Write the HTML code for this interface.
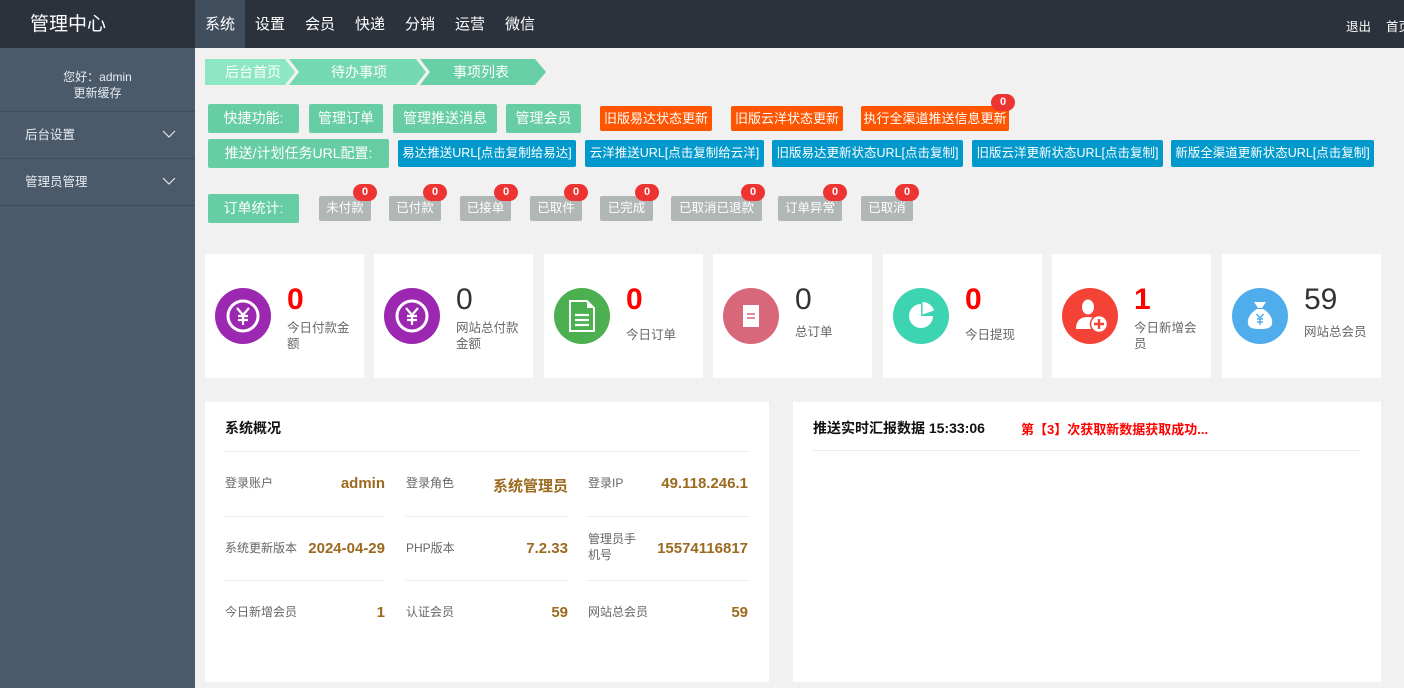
<!DOCTYPE html>
<html><head><meta charset="utf-8"><style>
*{margin:0;padding:0;box-sizing:border-box}
body{width:1404px;height:688px;overflow:hidden;background:#f1f1f1;font-family:"Liberation Sans","Noto Sans CJK SC",sans-serif;position:relative;font-size:13px}
.a{position:absolute}
.top{left:0;top:0;width:1404px;height:48px;background:#2c323c}
.nav{top:0;height:48px;line-height:50px;color:#fff;font-size:15px;text-align:center;width:50px}
.side{left:0;top:48px;width:195px;height:640px;background:#4a5a6b}
.sb{left:0;width:195px;border-bottom:1px solid #3f4d5b;color:#e6ebf0}
.btn{height:29px;line-height:29px;color:#fff;font-size:14px;text-align:center;border-radius:2px;background:#66cda4}
.or{height:25px;line-height:25px;background:#ff5500;color:#fff;font-size:13px;text-align:center;border-radius:2px;top:106px}
.bl{height:27px;line-height:27px;background:#0199cc;color:#fff;font-size:12.5px;text-align:center;border-radius:2px;top:140px}
.gr{height:25px;line-height:25px;background:#b1b7b6;color:#fff;font-size:12.5px;text-align:center;border-radius:2px;top:196px}
.bd{width:24px;height:17px;line-height:17px;border-radius:9px;background:#ee3333;color:#fff;font-size:11px;font-weight:bold;text-align:center}
.card{top:254px;width:159px;height:124px;background:#fff}
.ci{left:10px;top:34px;width:56px;height:56px;border-radius:50%}
.num{left:82px;top:28px;font-size:30px;line-height:36px}
.red{color:#f00;font-weight:bold}
.lb{left:82px;top:66px;font-size:12.5px;color:#666;line-height:16px;width:70px}
.pn{background:#fff}
.k{font-size:12px;color:#666}
.v{font-size:15px;color:#9b6a1e;font-weight:bold;text-align:right}
.hl{height:1px;background:#ececec}
</style></head><body>
<div class="a top"></div>
<div class="a" style="left:30px;top:9px;color:#fff;font-size:19px">管理中心</div>
<div class="a" style="left:195px;top:0;width:50px;height:48px;background:#3f4d5c"></div>
<div class="a nav" style="left:195px">系统</div>
<div class="a nav" style="left:245px">设置</div>
<div class="a nav" style="left:295px">会员</div>
<div class="a nav" style="left:345px">快递</div>
<div class="a nav" style="left:395px">分销</div>
<div class="a nav" style="left:445px">运营</div>
<div class="a nav" style="left:495px">微信</div>
<div class="a" style="left:1346px;top:16px;color:#fff;font-size:12.5px">退出</div>
<div class="a" style="left:1386px;top:16px;color:#fff;font-size:12.5px;white-space:nowrap">首页</div>
<div class="a side"></div>
<div class="a sb" style="top:48px;height:64px;text-align:center;font-size:12px;line-height:16px;padding-top:21px">您好：admin<br>更新缓存</div>
<div class="a sb" style="top:112px;height:47px;line-height:46px;padding-left:25px;font-size:12.5px">后台设置</div>
<div class="a sb" style="top:159px;height:47px;line-height:46px;padding-left:25px;font-size:12.5px">管理员管理</div>
<svg class="a" style="left:162px;top:129px" width="14" height="10"><path d="M1 2 L7 8 L13 2" fill="none" stroke="#dfe4ea" stroke-width="1.2"/></svg>
<svg class="a" style="left:162px;top:176px" width="14" height="10"><path d="M1 2 L7 8 L13 2" fill="none" stroke="#dfe4ea" stroke-width="1.2"/></svg>
<div class="a" style="left:1381px;top:48px;width:23px;height:640px;background:#f1f1f1"></div>

<svg class="a" style="left:205px;top:59px" width="345" height="26">
<polygon points="0,0 80,0 90,13 80,26 0,26" fill="#8de6c4"/>
<polygon points="84,0 211,0 221,13 211,26 84,26 94,13" fill="#74d9b3"/>
<polygon points="215,0 330,0 341,13 330,26 215,26 225,13" fill="#66cfa5"/>
<text x="20" y="18" fill="#fff" font-size="14" font-family="Liberation Sans,Noto Sans CJK SC">后台首页</text>
<text x="126" y="18" fill="#fff" font-size="14" font-family="Liberation Sans,Noto Sans CJK SC">待办事项</text>
<text x="248" y="18" fill="#fff" font-size="14" font-family="Liberation Sans,Noto Sans CJK SC">事项列表</text>
</svg>

<div class="a btn" style="left:208px;top:104px;width:91px">快捷功能:</div>
<div class="a btn" style="left:309px;top:104px;width:74px">管理订单</div>
<div class="a btn" style="left:393px;top:104px;width:104px">管理推送消息</div>
<div class="a btn" style="left:506px;top:104px;width:75px">管理会员</div>
<div class="a or" style="left:600px;width:112px">旧版易达状态更新</div>
<div class="a or" style="left:731px;width:112px">旧版云洋状态更新</div>
<div class="a or" style="left:861px;width:148px">执行全渠道推送信息更新</div>
<div class="a bd" style="left:991px;top:94px">0</div>

<div class="a btn" style="left:208px;top:139px;width:181px">推送/计划任务URL配置:</div>
<div class="a bl" style="left:398px;width:178px">易达推送URL[点击复制给易达]</div>
<div class="a bl" style="left:585px;width:179px">云洋推送URL[点击复制给云洋]</div>
<div class="a bl" style="left:772px;width:191px">旧版易达更新状态URL[点击复制]</div>
<div class="a bl" style="left:972px;width:191px">旧版云洋更新状态URL[点击复制]</div>
<div class="a bl" style="left:1171px;width:203px">新版全渠道更新状态URL[点击复制]</div>

<div class="a btn" style="left:208px;top:194px;width:91px">订单统计:</div>
<div class="a gr" style="left:319px;width:52px">未付款</div><div class="a bd" style="left:353px;top:184px">0</div>
<div class="a gr" style="left:389px;width:52px">已付款</div><div class="a bd" style="left:423px;top:184px">0</div>
<div class="a gr" style="left:460px;width:51px">已接单</div><div class="a bd" style="left:494px;top:184px">0</div>
<div class="a gr" style="left:530px;width:52px">已取件</div><div class="a bd" style="left:564px;top:184px">0</div>
<div class="a gr" style="left:600px;width:53px">已完成</div><div class="a bd" style="left:635px;top:184px">0</div>
<div class="a gr" style="left:671px;width:91px">已取消已退款</div><div class="a bd" style="left:741px;top:184px">0</div>
<div class="a gr" style="left:778px;width:64px">订单异常</div><div class="a bd" style="left:823px;top:184px">0</div>
<div class="a gr" style="left:861px;width:52px">已取消</div><div class="a bd" style="left:895px;top:184px">0</div>

<div class="a card" style="left:205px"><div class="a ci" style="background:#9c27b0"><svg width="56" height="56"><circle cx="28" cy="28" r="15" fill="none" stroke="#fff" stroke-width="3"/><path d="M22 20 L28 27 L34 20 M28 27 V37 M23 28 H33 M23 32 H33" stroke="#fff" stroke-width="2.2" fill="none"/></svg></div><div class="a num red">0</div><div class="a lb">今日付款金额</div></div>
<div class="a card" style="left:374px"><div class="a ci" style="background:#9c27b0"><svg width="56" height="56"><circle cx="28" cy="28" r="15" fill="none" stroke="#fff" stroke-width="3"/><path d="M22 20 L28 27 L34 20 M28 27 V37 M23 28 H33 M23 32 H33" stroke="#fff" stroke-width="2.2" fill="none"/></svg></div><div class="a num" style="color:#333">0</div><div class="a lb">网站总付款金额</div></div>
<div class="a card" style="left:544px"><div class="a ci" style="background:#4caf50"><svg width="56" height="56"><path d="M16 13 H33 L40 20 V43 H16 Z" fill="none" stroke="#fff" stroke-width="2"/><path d="M33 13 V20 H40 Z" fill="#fff"/><path d="M21 27 H35 M21 32 H35 M21 37 H35" stroke="#fff" stroke-width="2.2"/></svg></div><div class="a num red">0</div><div class="a lb" style="top:73px">今日订单</div></div>
<div class="a card" style="left:713px"><div class="a ci" style="background:#d9677a"><svg width="56" height="56"><rect x="20" y="17" width="16" height="22" fill="#fff"/><path d="M24 26 H32 M24 30 H32" stroke="#d9677a" stroke-width="1.6"/></svg></div><div class="a num" style="color:#333">0</div><div class="a lb" style="top:70px">总订单</div></div>
<div class="a card" style="left:883px"><div class="a ci" style="background:#3dd4b2"><svg width="56" height="56"><path d="M28 16 A12 12 0 1 0 40 28 L28 28 Z" fill="#fff"/><path d="M29.5 14 V26.5 L41 22.5 A12 12 0 0 0 29.5 14 Z" fill="#fff"/></svg></div><div class="a num red">0</div><div class="a lb" style="top:73px">今日提现</div></div>
<div class="a card" style="left:1052px"><div class="a ci" style="background:#f44336"><svg width="56" height="56"><ellipse cx="26" cy="19" rx="6" ry="7.5" fill="#fff"/><path d="M14 41 C14 32 19 29 26 29 C31 29 34 31 35 33 L35 41 Z" fill="#fff"/><circle cx="37" cy="36" r="8.5" fill="#fff" stroke="#f44336" stroke-width="1.5"/><path d="M32 36 H42 M37 31 V41" stroke="#f44336" stroke-width="2.4"/></svg></div><div class="a num red">1</div><div class="a lb">今日新增会员</div></div>
<div class="a card" style="left:1222px"><div class="a ci" style="background:#4fadec"><svg width="56" height="56"><path d="M22 14 L34 14 L30 20 L26 20 Z" fill="#fff"/><path d="M25 21 H31 C38 25 41 31 40 36 C39 40 35 41 28 41 C21 41 17 40 16 36 C15 31 18 25 25 21 Z" fill="#fff"/><path d="M24.5 26 L28 30 L31.5 26 M28 30 V37 M25 31 H31 M25 34 H31" stroke="#4fadec" stroke-width="1.5" fill="none"/></svg></div><div class="a num" style="color:#333">59</div><div class="a lb" style="top:70px">网站总会员</div></div>

<div class="a pn" style="left:205px;top:402px;width:564px;height:280px">
<div class="a" style="left:20px;top:16px;font-size:14px;font-weight:bold;color:#111">系统概况</div>
<div class="a hl" style="left:20px;top:49px;width:523px"></div>
<div class="a k" style="left:20px;top:72px">登录账户</div><div class="a v" style="left:100px;top:73px;width:80px">admin</div>
<div class="a k" style="left:201px;top:72px">登录角色</div><div class="a v" style="left:261px;top:73px;width:102px">系统管理员</div>
<div class="a k" style="left:383px;top:72px">登录IP</div><div class="a v" style="left:423px;top:73px;width:120px">49.118.246.1</div>
<div class="a hl" style="left:20px;top:114px;width:160px"></div><div class="a hl" style="left:201px;top:114px;width:162px"></div><div class="a hl" style="left:383px;top:114px;width:160px"></div>
<div class="a k" style="left:20px;top:137px">系统更新版本</div><div class="a v" style="left:90px;top:138px;width:90px">2024-04-29</div>
<div class="a k" style="left:201px;top:137px">PHP版本</div><div class="a v" style="left:261px;top:138px;width:102px">7.2.33</div>
<div class="a k" style="left:383px;top:129px;line-height:16px">管理员手<br>机号</div><div class="a v" style="left:423px;top:138px;width:120px">15574116817</div>
<div class="a hl" style="left:20px;top:178px;width:160px"></div><div class="a hl" style="left:201px;top:178px;width:162px"></div><div class="a hl" style="left:383px;top:178px;width:160px"></div>
<div class="a k" style="left:20px;top:201px">今日新增会员</div><div class="a v" style="left:100px;top:202px;width:80px">1</div>
<div class="a k" style="left:201px;top:201px">认证会员</div><div class="a v" style="left:261px;top:202px;width:102px">59</div>
<div class="a k" style="left:383px;top:201px">网站总会员</div><div class="a v" style="left:423px;top:202px;width:120px">59</div>
</div>

<div class="a pn" style="left:793px;top:402px;width:588px;height:280px">
<div class="a" style="left:20px;top:16px;font-size:14px;font-weight:bold;color:#111;white-space:nowrap">推送实时汇报数据 15:33:06</div>
<div class="a" style="left:228px;top:17px;font-size:13px;font-weight:bold;color:#f00;white-space:nowrap">第【3】次获取新数据获取成功...</div>
<div class="a hl" style="left:20px;top:48px;width:547px"></div>
</div>
</body></html>
